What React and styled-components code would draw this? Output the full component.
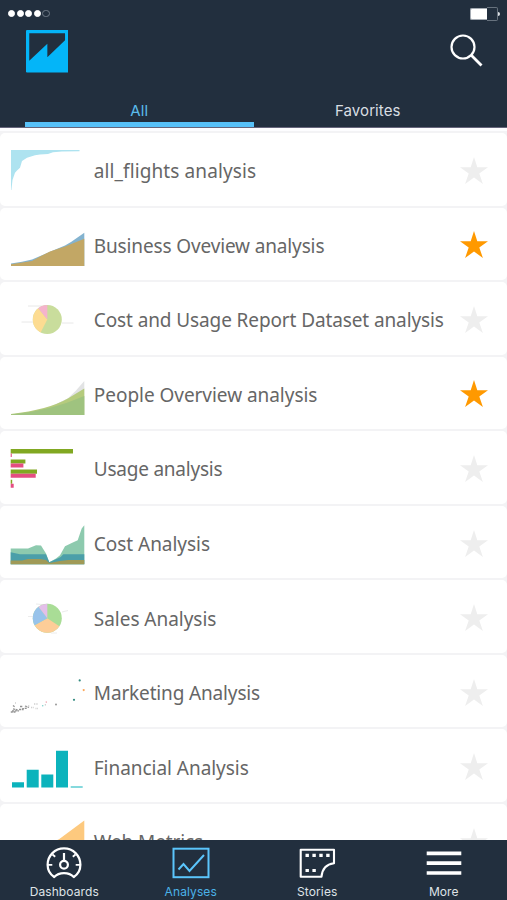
import React, { useState } from "react";
import styled, { createGlobalStyle } from "styled-components";

const analyses = [
  { name: "all_flights analysis", thumb: FlightsThumb, tracking: 0.1 },
  {
    name: "Business Oveview analysis",
    thumb: BusinessThumb,
    tracking: -0.14,
    favorite: true,
  },
  {
    name: "Cost and Usage Report Dataset analysis",
    thumb: CostUsageThumb,
    tracking: -0.11,
  },
  {
    name: "People Overview analysis",
    thumb: PeopleThumb,
    tracking: -0.04,
    favorite: true,
  },
  { name: "Usage analysis", thumb: UsageThumb, tracking: -0.23 },
  { name: "Cost Analysis", thumb: CostThumb, tracking: -0.03 },
  { name: "Sales Analysis", thumb: SalesThumb, tracking: -0.03 },
  { name: "Marketing Analysis", thumb: MarketingThumb, tracking: -0.15 },
  { name: "Financial Analysis", thumb: FinancialThumb, tracking: -0.04 },
  { name: "Web Metrics", thumb: WebThumb, tracking: -0.1 },
];

const menu = [
  { name: "Dashboards", icon: GaugeIcon },
  { name: "Analyses", icon: ChartIcon },
  { name: "Stories", icon: StoryIcon },
  { name: "More", icon: MoreIcon },
];

export default function App() {
  const [tab, setTab] = useState("All");
  const [page, setPage] = useState("Analyses");
  const [favorites, setFavorites] = useState(
    analyses.filter((elem) => elem.favorite).map((elem) => elem.name)
  );

  function toggle(name) {
    if (favorites.includes(name)) {
      setFavorites(favorites.filter((elem) => elem !== name));
    } else {
      setFavorites([...favorites, name]);
    }
  }

  const list =
    tab === "All"
      ? analyses
      : analyses.filter((elem) => favorites.includes(elem.name));

  return (
    <Screen>
      <GlobalStyle />
      <Header>
        <StatusBar>
          <Signal>
            <Dot $full />
            <Dot $full />
            <Dot $full />
            <Dot $full />
            <Dot />
          </Signal>
          <Battery>
            <Charge />
          </Battery>
        </StatusBar>
        <TopBar>
          <Logo />
          <SearchButton aria-label="Search">
            <SearchIcon />
          </SearchButton>
        </TopBar>
        <Tabs>
          {["All", "Favorites"].map((elem) => (
            <Tab key={elem} $active={tab === elem} onClick={() => setTab(elem)}>
              {elem}
            </Tab>
          ))}
        </Tabs>
      </Header>
      <List>
        {list.map(({ name, thumb: Thumb, tracking }) => (
          <Row key={name}>
            <Thumb />
            <Name $tracking={tracking}>{name}</Name>
            <StarButton
              aria-label="Favorite"
              $active={favorites.includes(name)}
              onClick={() => toggle(name)}
            >
              <svg width="28" height="27" viewBox="0 0 28 27">
                <path d="M14 0L17.3 10.2H28L19.3 16.5L22.9 27L14 20.5L5.1 27L8.7 16.5L0 10.2H10.7Z" />
              </svg>
            </StarButton>
          </Row>
        ))}
      </List>
      <Footer>
        {menu.map(({ name, icon: Icon }) => (
          <FooterItem
            key={name}
            $active={page === name}
            onClick={() => setPage(name)}
          >
            <Icon />
            {name}
          </FooterItem>
        ))}
      </Footer>
    </Screen>
  );
}

function Logo() {
  return (
    <svg width="42.5" height="42.5" viewBox="0 0 43 43">
      <rect width="43" height="43" rx="1" fill="#04b5f8" />
      <path d="M3.3 3.3H39.5V10.3L21.6 27.5V14L3.3 31Z" fill="#222f3e" />
    </svg>
  );
}

function SearchIcon() {
  return (
    <svg width="34" height="34" viewBox="0 0 34 34" fill="none" stroke="#fff">
      <circle cx="13" cy="13" r="11.5" strokeWidth="2.2" />
      <path d="M21.3 21.3L31.5 31.5" strokeWidth="2.8" />
    </svg>
  );
}

function GaugeIcon() {
  return (
    <Icon viewBox="0 0 40 34" strokeWidth="2.2">
      <path
        d="M10.2 32C6 29.3 3.6 25 3.6 19.8C3.6 10.5 10.9 3.4 20 3.4S36.4 10.5 36.4 19.8C36.4 25 34 29.3 29.8 32C25 26.8 15 26.8 10.2 32Z"
        strokeLinejoin="round"
      />
      <circle cx="20" cy="19.8" r="3.9" />
      <path d="M20 8V15.8" />
      <path
        d="M4 19.8H8.3M31.7 19.8H36M8.5 9.5L11.2 11.8M31.5 9.5L28.8 11.8"
        strokeWidth="1.8"
      />
    </Icon>
  );
}

function ChartIcon() {
  return (
    <Icon viewBox="0 0 40 34" strokeWidth="2">
      <rect x="2.5" y="3.7" width="35" height="28.5" />
      <path d="M7.5 24.5L12.5 19L18.5 26L33 10" />
    </Icon>
  );
}

function StoryIcon() {
  return (
    <Icon viewBox="0 0 40 34" strokeWidth="2.1">
      <path
        d="M3.7 4.8H37V18.3C30 19.2 25.2 24 24.5 31.7H3.7Z"
        strokeLinejoin="round"
      />
      <path
        d="M8.5 10.4H33M8.5 25.5H19"
        strokeWidth="3.2"
        strokeDasharray="3.4 3.5"
      />
    </Icon>
  );
}

function MoreIcon() {
  return (
    <Icon viewBox="0 0 40 34" strokeWidth="3.7">
      <path d="M2.7 8.4H37.3M2.7 18.2H37.3M2.7 28H37.3" />
    </Icon>
  );
}

function FlightsThumb() {
  return (
    <Thumbnail viewBox="0 0 76 72">
      <path
        d="M1 17H69.5V18.3L52 18.6L43 19.3L38 21L30 21.5L25 22.3L17 24.7L12 28L10 34.7L7 37.5L5 39.7L2.5 47L1.4 57H1Z"
        fill="#aee3f0"
      />
    </Thumbnail>
  );
}

function BusinessThumb() {
  return (
    <Thumbnail viewBox="0 0 76 72">
      <path
        d="M1 55.4L12 53.8L22 51.6L40 43.8L55 37.4L61 34L74.3 24.8V58H1Z"
        fill="#84b3cf"
      />
      <path
        d="M1 56.2L22 52.9L31 48L40 43.6L55 38.6L74.3 30.8V58H1Z"
        fill="#c2a765"
      />
    </Thumbnail>
  );
}

function CostUsageThumb() {
  return (
    <Thumbnail viewBox="0 0 76 72">
      <path d="M18 24H32M11.5 40H23M52 41H63.5" stroke="#e8e8e8" />
      <circle cx="37.3" cy="37.6" r="14.5" fill="#c9dd9c" />
      <path
        d="M37.3 37.6L30.6 50.5A14.5 14.5 0 0 1 28.2 26.3Z"
        fill="#fddc92"
      />
      <path
        d="M37.3 37.6L28.2 26.3A14.5 14.5 0 0 1 37.3 23.1Z"
        fill="#f5b3cc"
      />
    </Thumbnail>
  );
}

function PeopleThumb() {
  return (
    <Thumbnail viewBox="0 0 76 72">
      <path d="M40 50L58 41.3L66 33.5L74.3 24V58H40Z" fill="#e2e3e4" />
      <path d="M1 57Q38 53 58.3 41.3L74.3 31.6V58H1Z" fill="#b5cb7d" />
      <path d="M1 57.6Q40 54 74.3 39V58H1Z" fill="#9fc37f" />
    </Thumbnail>
  );
}

function UsageThumb() {
  return (
    <Thumbnail viewBox="0 0 76 72">
      <path
        d="M.7 18.1H63V22.4H.7ZM.7 28.5H15.4V32.5H.7ZM.7 38.5H27V42.8H.7ZM.7 48.8H2.2V52.8H.7Z"
        fill="#81a822"
      />
      <path
        d="M.7 22.4H1.8V26H.7ZM.7 32.5H13.4V36.5H.7ZM.7 42.8H25.7V46.8H.7ZM.7 52.8H3.7V56.8H.7Z"
        fill="#e54d82"
      />
    </Thumbnail>
  );
}

function CostThumb() {
  return (
    <Thumbnail viewBox="0 0 76 72">
      <path
        d="M.7 42.5L18 42.5L26 39.2L31 39.5L36 47.5L39.3 56.2L46 52.5L50 49.2L55 40.2L61.7 36.9L67.7 34.2L71.7 22.5L74.3 19.2V58.2H.7Z"
        fill="#8dcaae"
      />
      <path
        d="M.7 46.2L10 48.2H36L39.3 56.2L50.7 50.9L53.3 48.2H74.3V58.2H.7Z"
        fill="#4b9fa9"
      />
      <path
        d="M.7 54.4H12L18 53L30 53L36 54L39.3 57L50 55L58 54H74.3V58.2H.7Z"
        fill="#a09a57"
      />
    </Thumbnail>
  );
}

function SalesThumb() {
  return (
    <Thumbnail viewBox="0 0 76 72">
      <path
        d="M26 23L32 23.5M18 35.5H23M52 31L58 29.5M41 52H47"
        stroke="#ececec"
      />
      <circle cx="37.3" cy="37.3" r="14.5" fill="#a9dd96" />
      <path
        d="M37.3 37.3L49.4 45.3A14.5 14.5 0 0 1 24.6 44.3Z"
        fill="#fdcd98"
      />
      <path
        d="M37.3 37.3L24.6 44.3A14.5 14.5 0 0 1 28.5 25.8Z"
        fill="#98c3eb"
      />
      <path
        d="M37.3 37.3L28.5 25.8A14.5 14.5 0 0 1 37.3 22.8Z"
        fill="#e3bfe9"
      />
    </Thumbnail>
  );
}

function MarketingThumb() {
  return (
    <Thumbnail viewBox="0 0 76 72">
      <path
        d="M.8 57H6M2 55.8H9M3 53.8L8 55M9 54.5H14M12 53.8L17 53.2M3 50.5L5 52M10 51.5H13M15 51L19 52.5"
        stroke="#929292"
        strokeWidth="1.3"
        strokeDasharray="2 .7"
      />
      <path
        d="M18 51H20M21 52.5H24M24 49H28M25.5 53.5H28M5 48H6"
        stroke="#cfcfcf"
        strokeWidth="1.4"
        strokeDasharray="1 .7"
      />
      <g fill="#338b80">
        <circle cx="69.7" cy="25.4" r="1.1" />
        <circle cx="64" cy="44.8" r="1.1" />
        <circle cx="32.7" cy="50.8" r=".8" fill="#7ed0cb" />
        <circle cx="36.3" cy="47.1" r=".8" fill="#f0a7b1" />
        <circle cx="35.3" cy="49.8" r=".6" fill="#a9a9a9" />
        <circle cx="46" cy="49.4" r="1" fill="#999" />
        <circle cx="73.7" cy="35.1" r="1.1" fill="#fba85c" />
      </g>
    </Thumbnail>
  );
}

function FinancialThumb() {
  return (
    <Thumbnail viewBox="0 0 76 72">
      <path
        d="M2 52.2H14V57.6H2ZM16.7 39.8H28.7V57.6H16.7ZM31.3 44.5H43.3V57.6H31.3ZM46 20.8H58V57.6H46ZM60.7 56.5H72.7V57.6H60.7Z"
        fill="#0cb3bc"
      />
    </Thumbnail>
  );
}

function WebThumb() {
  return (
    <Thumbnail viewBox="0 0 76 72">
      <path d="M1 58L49 35.2L74.3 16.6V58Z" fill="#fdc97e" />
    </Thumbnail>
  );
}

const GlobalStyle = createGlobalStyle`
  * {
    box-sizing: border-box;
  }

  body {
    margin: 0;
  }

  button {
    border: none;
    padding: 0;
    background: none;
    cursor: pointer;
  }
`;

const Screen = styled.div`
  width: 100%;
  height: 100vh;
  display: flex;
  flex-direction: column;
  overflow: hidden;
  background-color: #fff;
  font-family: Inter, "Liberation Sans", sans-serif;
`;

const Header = styled.header`
  height: 128px;
  flex-shrink: 0;
  display: flex;
  flex-direction: column;
  background-color: #222f3e;
  border-bottom: 1px solid #66657b;
`;

const StatusBar = styled.div`
  height: 30px;
  padding: 7px 7px 0 8px;
  display: flex;
  justify-content: space-between;
`;

const Signal = styled.div`
  height: 13px;
  display: flex;
  align-items: center;
  gap: 1.4px;
`;

const Dot = styled.span`
  width: 7.2px;
  height: 7.2px;
  border-radius: 50%;
  border: 1px solid ${(props) => (props.$full ? "#fff" : "#707b87")};
  background-color: ${(props) => (props.$full ? "#fff" : "transparent")};
`;

const Battery = styled.div`
  width: 30px;
  height: 13px;
  display: flex;
  align-items: center;

  &::before {
    content: "";
    order: 1;
    width: 10px;
    height: 12px;
    border: 1px solid #67727e;
    border-left: none;
    border-radius: 0 2px 2px 0;
  }

  &::after {
    content: "";
    order: 2;
    width: 2px;
    height: 4px;
    border-radius: 0 2px 2px 0;
    background-color: #dce0e4;
  }
`;

const Charge = styled.div`
  width: 17.5px;
  height: 12px;
  border: 1px solid #a4abb3;
  border-right: none;
  border-radius: 2px 0 0 2px;
  background-color: #fff;
`;

const TopBar = styled.div`
  height: 68px;
  flex-shrink: 0;
  padding: 0 23px 0 25.5px;
  display: flex;
  justify-content: space-between;
  align-items: flex-start;
`;

const SearchButton = styled.button`
  height: 34px;
  margin-top: 4px;
`;

const Tabs = styled.div`
  flex: 1;
  padding: 0 25px;
  display: flex;
`;

const Tab = styled.button`
  flex: 1;
  padding-top: 1px;
  border-bottom: 5px solid
    ${(props) => (props.$active ? "#57c1f8" : "transparent")};
  font-family: Inter, "Liberation Sans", sans-serif;
  font-size: 15px;
  letter-spacing: 0.1px;
  color: ${(props) => (props.$active ? "#5bbcec" : "#d9dee3")};
`;

const List = styled.main`
  flex: 1;
  min-height: 0;
  padding-top: 2px;
  border-top: 3px solid #fdfdff;
  display: flex;
  flex-direction: column;
  gap: 2px;
  overflow: hidden;
  background-color: #f3f3f5;
`;

const Row = styled.div`
  height: 72.56px;
  flex-shrink: 0;
  padding: 0 18.6px 0 10px;
  display: flex;
  align-items: center;
  border-radius: 5px;
  background-color: #fff;
`;

const Thumbnail = styled.svg`
  width: 76px;
  height: 72px;
  flex-shrink: 0;
`;

const Name = styled.div`
  flex: 1;
  margin-left: 7.8px;
  padding-top: 4px;
  font-family: "Noto Sans", "Open Sans", sans-serif;
  font-size: 19px;
  letter-spacing: ${(props) => props.$tracking}px;
  white-space: nowrap;
  color: #666;
`;

const StarButton = styled.button`
  height: 27px;
  margin-top: 2px;

  svg {
    display: block;
    fill: ${(props) => (props.$active ? "#ff9900" : "#eee")};
  }
`;

const Footer = styled.footer`
  height: 60px;
  flex-shrink: 0;
  padding: 5px 0 0 1px;
  display: flex;
  background-color: #222f3e;
`;

const FooterItem = styled.button`
  flex: 1;
  display: flex;
  flex-direction: column;
  align-items: center;
  gap: 5px;
  font-family: Inter, "Liberation Sans", sans-serif;
  font-size: 12px;
  line-height: 15px;
  letter-spacing: 0.1px;
  color: ${(props) => (props.$active ? "#4bb2e8" : "#dfe3e7")};

  svg {
    stroke: ${(props) => (props.$active ? "#5bc5fb" : "#fff")};
  }
`;

const Icon = styled.svg`
  width: 40px;
  height: 34px;
  fill: none;
`;
